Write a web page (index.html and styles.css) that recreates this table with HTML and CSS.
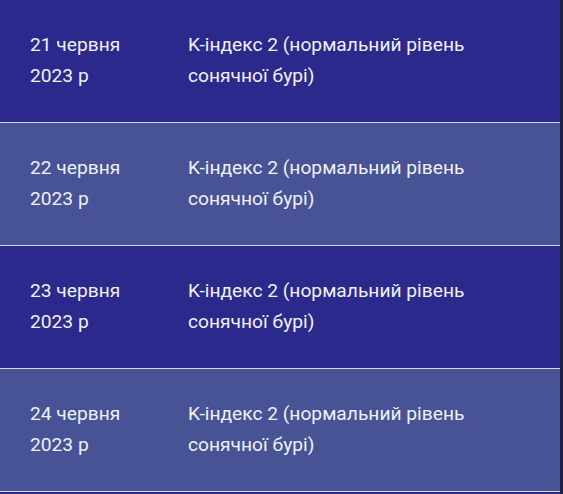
FILE: index.html
```html
<!DOCTYPE html>
<html lang="uk">
<head>
<meta charset="utf-8">
<link rel="stylesheet" href="styles.css">
</head>
<body>
<div class="page">
  <div class="table">
    <div class="row dark">
      <div class="date">21 червня 2023 р</div>
      <div class="desc">K-індекс 2 (нормальний рівень сонячної бурі)</div>
    </div>
    <div class="row light">
      <div class="date">22 червня 2023 р</div>
      <div class="desc">K-індекс 2 (нормальний рівень сонячної бурі)</div>
    </div>
    <div class="row dark">
      <div class="date">23 червня 2023 р</div>
      <div class="desc">K-індекс 2 (нормальний рівень сонячної бурі)</div>
    </div>
    <div class="row light">
      <div class="date">24 червня 2023 р</div>
      <div class="desc">K-індекс 2 (нормальний рівень сонячної бурі)</div>
    </div>
    <div class="row dark filler"></div>
  </div>
  <div class="edge"></div>
</div>
</body>
</html>
```
FILE: styles.css
```css
html, body {
  margin: 0;
  padding: 0;
  background: #1e1f4a;
  overflow: hidden;
}
.page {
  display: flex;
  height: 494px;
  overflow: hidden;
}
.table {
  width: 560px;
  display: flex;
  flex-direction: column;
  flex: none;
}
.edge {
  flex: 1;
  background: #1e1f4a;
}
.row {
  display: grid;
  grid-template-columns: 158px 330px;
  padding: 30px 0 32px 30px;
  height: 60px;
  border-bottom: 1px solid #d6d6e6;
  font-family: Roboto, "Noto Sans", sans-serif;
  font-size: 19.2px;
  line-height: 30.5px;
  color: #f0f0f8;
  flex: none;
}
.dark {
  background: #2b2a8c;
}
.light {
  background: #475394;
}
.filler {
  border-bottom: none;
}
.date {
  padding-right: 30px;
}
```
